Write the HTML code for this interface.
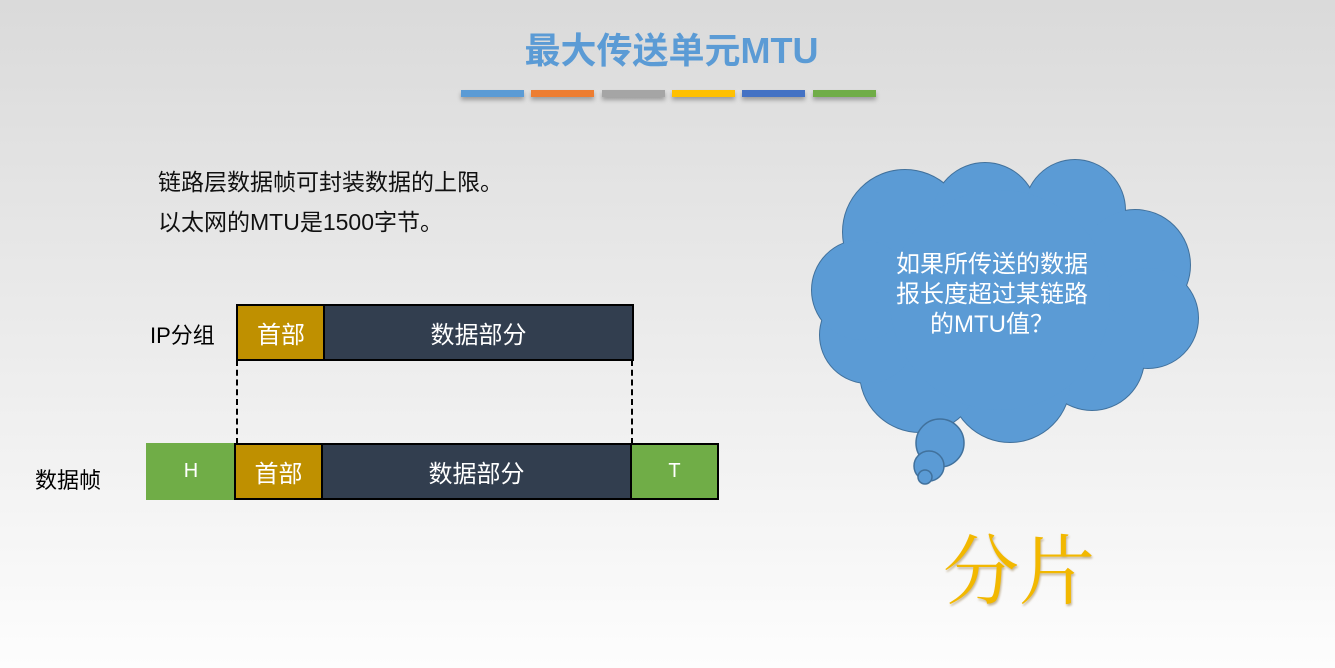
<!DOCTYPE html>
<html><head><meta charset="utf-8"><style>
body{margin:0;width:1335px;height:668px;overflow:hidden;background:linear-gradient(#dadada,#f4f4f4 75%,#fdfdfd);font-family:"Liberation Sans","Noto Sans CJK SC",sans-serif;position:relative}
.a{position:absolute}
.bar{position:absolute;top:90px;height:7px;width:63px;box-shadow:0 3px 4px rgba(0,0,0,.3)}
.b{position:absolute;border:2px solid #000;box-sizing:border-box;color:#fff;font-size:24px;display:flex;align-items:center;justify-content:center}
</style></head><body>
<div class="a" style="left:0;width:1335px;top:26px;text-align:center;font-size:36px;color:#5b9bd5;font-weight:bold;line-height:50px;text-indent:8px">最大传送单元MTU</div>
<div class="bar" style="left:461px;background:#5b9bd5"></div>
<div class="bar" style="left:531px;background:#ed7d31"></div>
<div class="bar" style="left:602px;background:#a5a5a5"></div>
<div class="bar" style="left:672px;background:#ffc000"></div>
<div class="bar" style="left:742px;background:#4472c4"></div>
<div class="bar" style="left:813px;background:#70ad47"></div>
<div class="a" style="left:158px;top:162px;font-size:23px;line-height:40px;color:#111">链路层数据帧可封装数据的上限。<br>以太网的MTU是1500字节。</div>
<div class="a" style="left:150px;top:318px;font-size:22px">IP分组</div>
<div class="a" style="left:35px;top:463px;font-size:22px">数据帧</div>
<div class="b" style="left:236px;top:304px;width:90px;height:57px;background:#bf9000">首部</div>
<div class="b" style="left:323px;top:304px;width:311px;height:57px;background:#323e4f">数据部分</div>
<div class="a" style="left:236px;top:360px;height:84px;border-left:2px dashed #000"></div>
<div class="a" style="left:631px;top:360px;height:84px;border-left:2px dashed #000"></div>
<div class="b" style="left:146px;top:443px;width:90px;height:57px;background:#70ad47;border-color:#70ad47;font-size:20px">H</div>
<div class="b" style="left:234px;top:443px;width:89px;height:57px;background:#bf9000">首部</div>
<div class="b" style="left:321px;top:443px;width:311px;height:57px;background:#323e4f">数据部分</div>
<div class="b" style="left:630px;top:443px;width:89px;height:57px;background:#70ad47;font-size:20px">T</div>
<svg class="a" style="left:0;top:0" width="1335" height="668">
<g stroke="#41719c" stroke-width="2" fill="#5b9bd5">
<circle cx="905" cy="232" r="62"/><circle cx="985" cy="215" r="52"/><circle cx="1075" cy="210" r="50"/><circle cx="1135" cy="265" r="55"/><circle cx="1148" cy="318" r="50"/><circle cx="1092" cy="358" r="52"/><circle cx="1010" cy="382" r="60"/><circle cx="920" cy="372" r="60"/><circle cx="868" cy="335" r="48"/><circle cx="862" cy="290" r="50"/><circle cx="1000" cy="300" r="110"/>
</g>
<g fill="#5b9bd5">
<circle cx="905" cy="232" r="62"/><circle cx="985" cy="215" r="52"/><circle cx="1075" cy="210" r="50"/><circle cx="1135" cy="265" r="55"/><circle cx="1148" cy="318" r="50"/><circle cx="1092" cy="358" r="52"/><circle cx="1010" cy="382" r="60"/><circle cx="920" cy="372" r="60"/><circle cx="868" cy="335" r="48"/><circle cx="862" cy="290" r="50"/><circle cx="1000" cy="300" r="110"/>
</g>
<g stroke="#41719c" stroke-width="1.5" fill="#5b9bd5"><circle cx="940" cy="443" r="24"/><circle cx="929" cy="466" r="15"/><circle cx="925" cy="477" r="7"/></g>
</svg>
<div class="a" style="left:862px;top:250px;width:260px;text-align:center;color:#fff;font-size:24px;line-height:30px">如果所传送的数据<br>报长度超过某链路<br>的MTU值？</div>
<div class="a" style="left:943px;top:518px;font-size:76px;line-height:110px;color:#f2b800;font-family:'Liberation Serif','Noto Serif CJK SC',serif;text-shadow:1px 2px 2px rgba(120,80,0,.4)">分片</div>
</body></html>
